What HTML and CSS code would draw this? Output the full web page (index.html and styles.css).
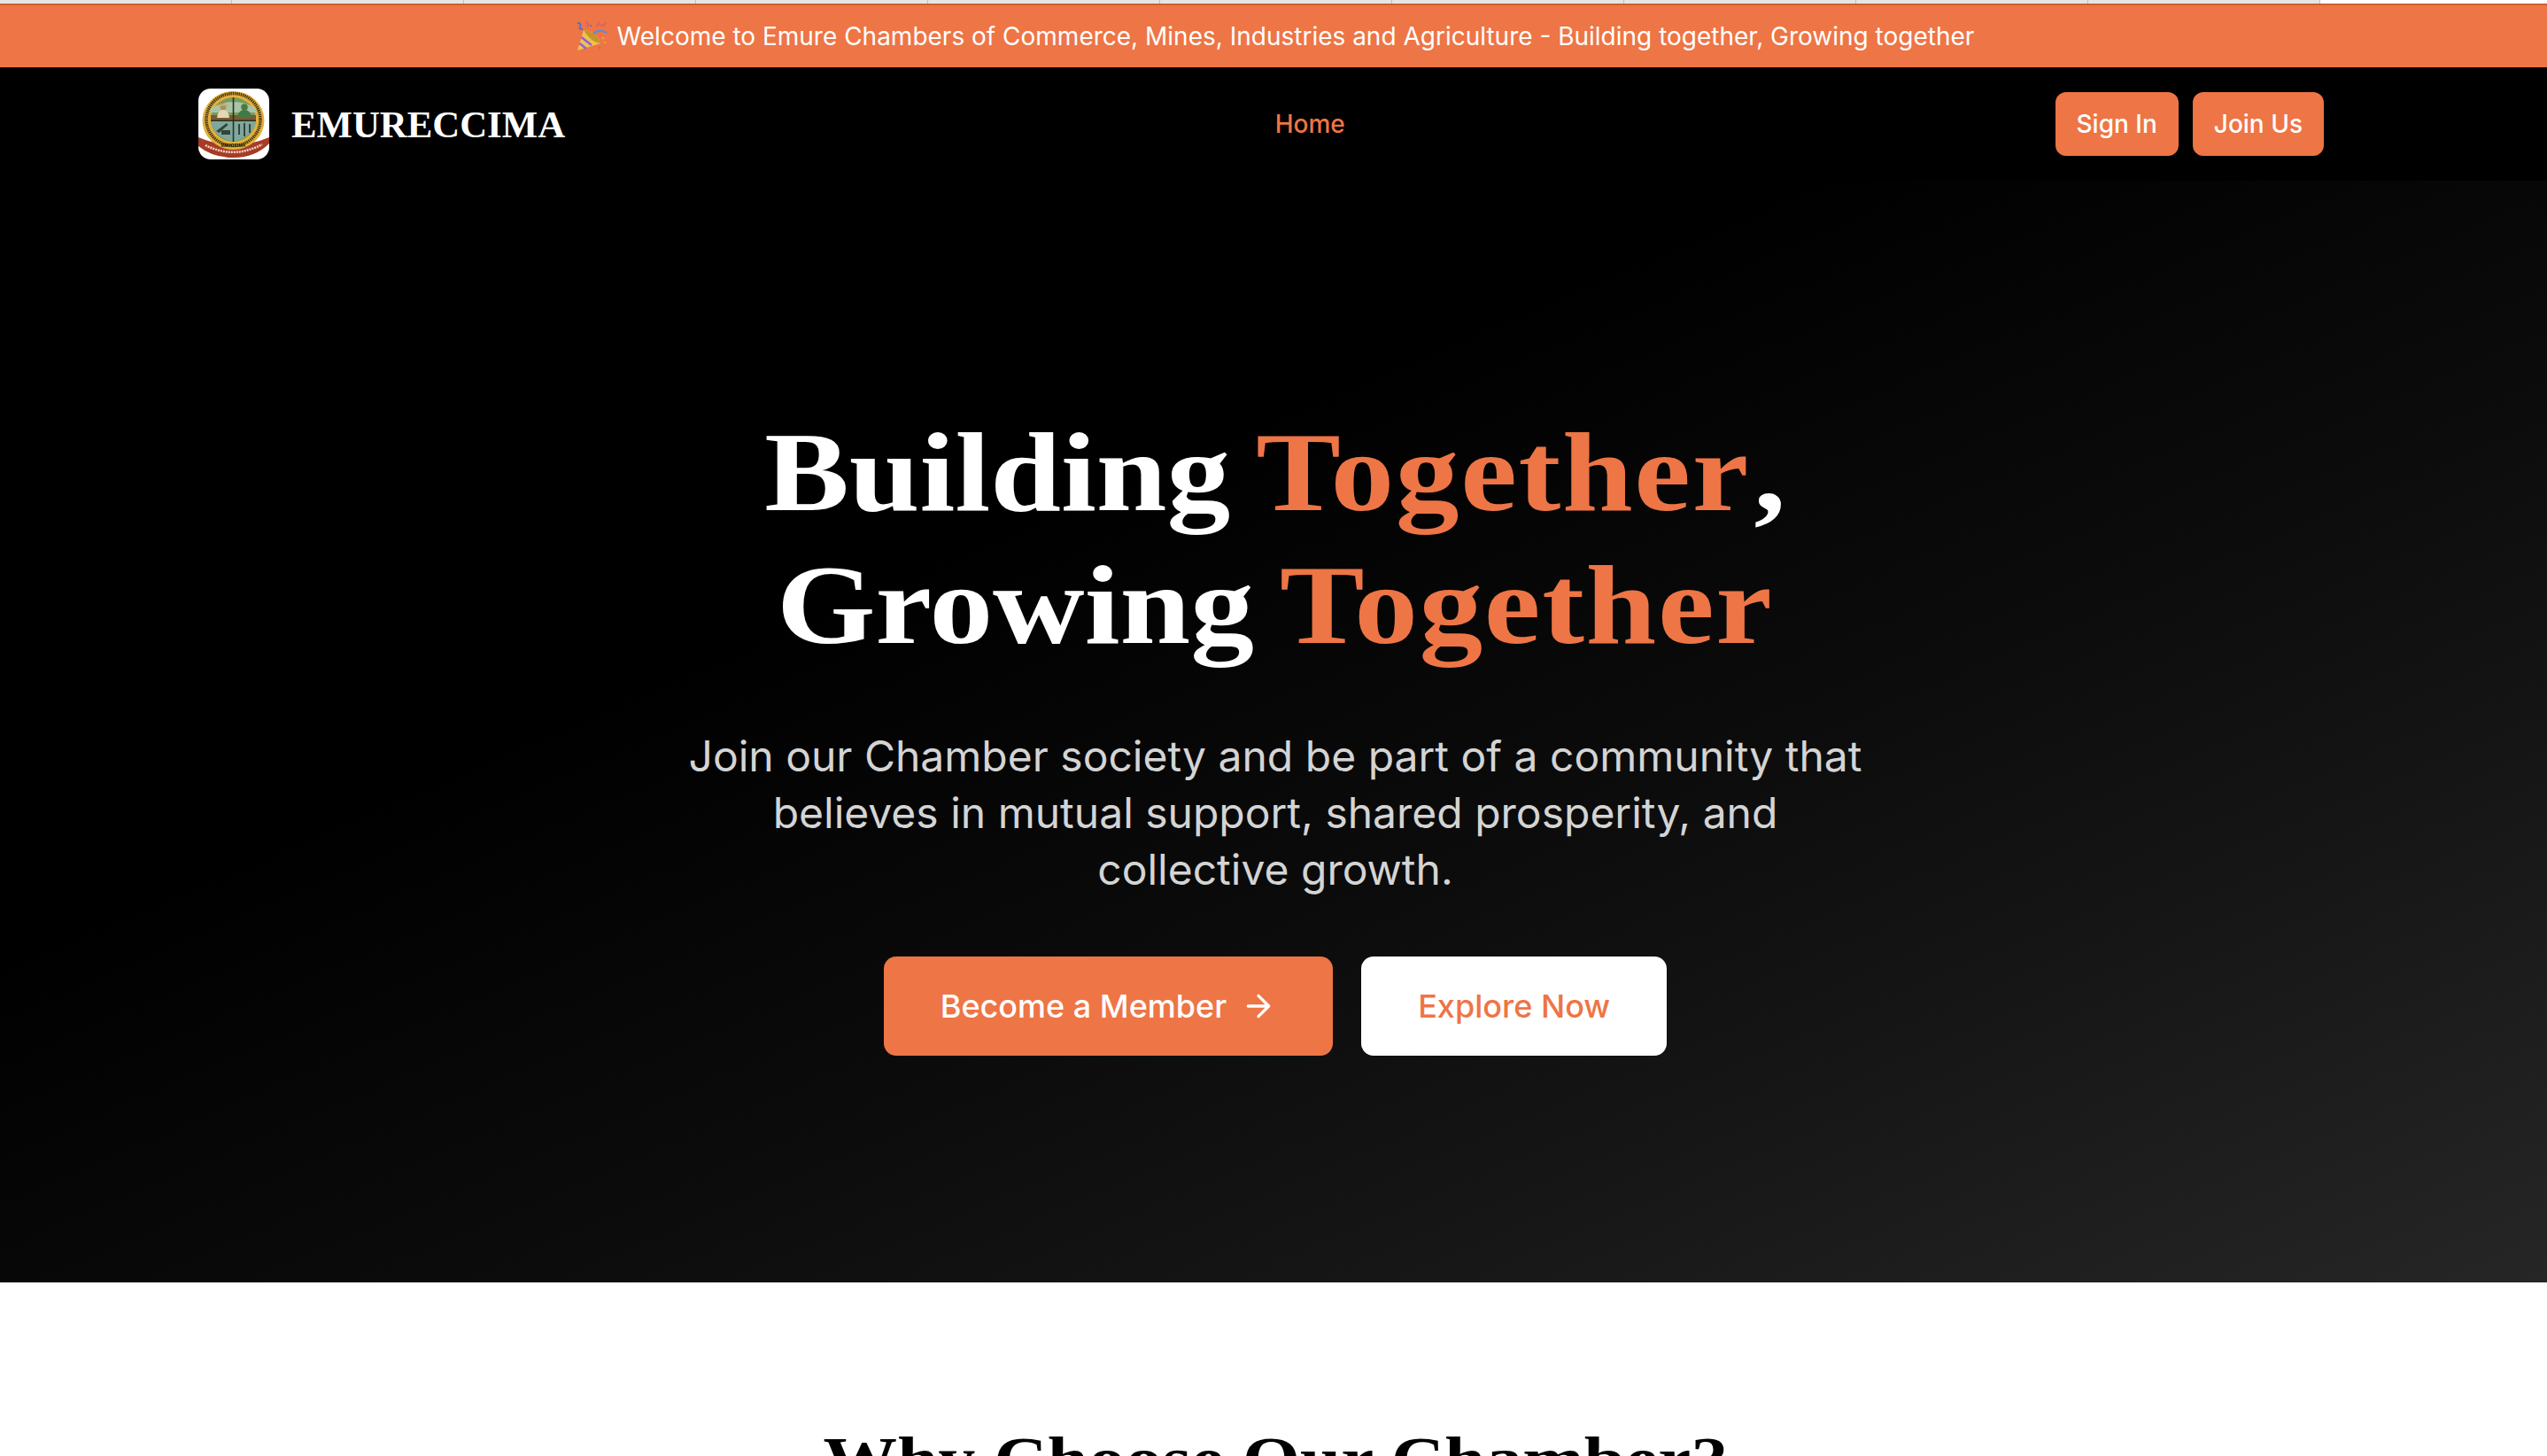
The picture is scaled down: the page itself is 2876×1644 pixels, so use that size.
FILE: index.html
```html
<!DOCTYPE html>
<html lang="en">
<head>
<meta charset="utf-8">
<title>EMURECCIMA</title>
<link rel="stylesheet" href="styles.css">
</head>
<body>
<div class="tabstrip">
  <span class="tab"></span><span class="tab"></span><span class="tab"></span><span class="tab"></span><span class="tab"></span><span class="tab"></span><span class="tab"></span><span class="tab"></span><span class="tab"></span><span class="tab"></span>
</div>
<div class="announce">
  <svg class="popper" viewBox="0 0 34 34" aria-hidden="true">
    <path d="M1 33 L8 10 Q16 10 22 16 Q27 21 27 25 Z" fill="#f0c24a"/>
    <path d="M8 10 Q16 10 22 16 Q27 21 27 25 Q20 24 15 19 Q10 14 8 10 Z" fill="#c9932c"/>
    <path d="M5.500 18 L17 27 M3.500 25 L11 31" stroke="#8f63d6" stroke-width="2.600" fill="none"/>
    <path d="M19 14 Q25 8 34 13" stroke="#4d8fe6" stroke-width="1.800" fill="none"/>
    <path d="M1 2 Q6 2 4 6 Q2 9 7 9" stroke="#4a6fd0" stroke-width="1.800" fill="none"/>
    <path d="M11 1 q4 3 1 6 M22 5 q4 0 3 -4 M27 4 q3 2 6 -2" stroke="#d8606a" stroke-width="1.800" fill="none"/>
    <circle cx="30" cy="19" r="1" fill="#e9bb45"/><circle cx="26" cy="30" r="1.200" fill="#d8606a"/><circle cx="32" cy="24" r="0.900" fill="#e9bb45"/><circle cx="16" cy="5" r="1" fill="#4a6fd0"/>
  </svg>
  <span>Welcome to Emure Chambers of Commerce, Mines, Industries and Agriculture - Building together, Growing together</span>
</div>
<header class="nav">
  <a class="brand" href="#">
    <span class="logo">
      <svg viewBox="0 0 80 80" aria-hidden="true">
        <rect width="80" height="80" fill="#fff"/>
        <path d="M0 55 Q40 72 80 55 V62 Q64 78 40 78 Q16 78 0 65 Z" fill="#a63c26"/>
        <path d="M8 64 Q40 80 72 63" stroke="#f2d9cf" stroke-width="2.500" stroke-dasharray="2 1" fill="none"/>
        <ellipse cx="39.500" cy="36" rx="35" ry="33" fill="#e2b23b"/>
        <ellipse cx="39.500" cy="35" rx="30.500" ry="29.500" fill="none" stroke="#4a3512" stroke-width="3.500" stroke-dasharray="1.500 0.800"/>
        <ellipse cx="39.500" cy="35" rx="25.500" ry="25" fill="#7a9a5f"/>
        <path d="M14 37 H65 Q63 54 39.500 60 Q16 54 14 37 Z" fill="#7fa79d"/>
        <path d="M14 22 Q40 8 65 22 L66 27 H13 Z" fill="#a9c5a8"/>
        <path d="M14 30 H65 V36 H14 Z" fill="#7a5a33"/>
        <path d="M38.700 10 h1.600 v50 h-1.600 Z M14 35.500 h51 v1.600 h-51 Z" fill="#26321f"/>
        <circle cx="28" cy="21" r="3.500" fill="#b98a57"/>
        <path d="M22 18 h12 v1.500 h-12 Z" fill="#c9ac6e"/>
        <path d="M21 33 q1 -9 7 -9 t7 9 Z" fill="#e5d7b5"/>
        <circle cx="52" cy="21" r="3.800" fill="#4f7a3a"/>
        <path d="M44 33 q1 -9 8 -9 t8 9 Z" fill="#3f7a48"/>
        <path d="M45 52 v-12 h2 v12 Z M51 54 v-15 h2 v15 Z M57 50 v-10 h2 v10 Z M20 48 l12 -9 1.500 2 -10 9 Z M26 52 h10 v-5 h-10 Z" fill="#34443a"/>
        <text class="logo-label" x="39.500" y="66" text-anchor="middle">EMUCCIMA</text>
      </svg>
    </span>
    <span class="brand-name">EMURECCIMA</span>
  </a>
  <nav class="nav-links"><a class="nav-link" href="#">Home</a></nav>
  <div class="nav-actions">
    <a class="nav-btn" href="#">Sign In</a>
    <a class="nav-btn" href="#">Join Us</a>
  </div>
</header>
<section class="hero">
  <h1 class="hero-title">Building <span class="accent">Together</span><span class="comma">,</span><br>Growing <span class="accent">Together</span></h1>
  <p class="hero-text">Join our Chamber society and be part of a community that believes in mutual support, shared prosperity, and collective growth.</p>
  <div class="hero-actions">
    <a class="cta cta-primary" href="#">Become a Member
      <svg class="arrow" viewBox="0 0 24 24" aria-hidden="true"><path d="M5 12h14M12 5l7 7-7 7"/></svg>
    </a>
    <a class="cta cta-light" href="#">Explore Now</a>
  </div>
</section>
<section class="why">
  <h2 class="why-title">Why Choose Our Chamber?</h2>
</section>
</body>
</html>
```
FILE: styles.css
```css
* { box-sizing: border-box; }
html, body { margin: 0; padding: 0; height: 100%; overflow: hidden; background: #fff; }
body { font-family: Inter, "Liberation Sans", sans-serif; color: #000; }
a { text-decoration: none; color: inherit; }

.tabstrip { height: 4px; background: #fff; display: flex; }
.tab { width: 262px; flex: none; background: #e6e6e3; border-right: 1px solid #bdbdb9; }

.announce {
  height: 72px;
  background: #ee7545;
  border-top: 2px solid #cf5f33;
  color: #fff;
  font-size: 28px;
  display: flex;
  align-items: center;
  justify-content: center;
  gap: 12px;
  padding-left: 4px;
}
.popper { width: 34px; height: 34px; flex: none; }

.nav {
  height: 128px;
  background: #000;
  padding: 0 252px 0 224px;
  display: flex;
  align-items: center;
  justify-content: space-between;
}
.brand { display: flex; align-items: center; gap: 25px; width: 414px; }
.logo { width: 80px; height: 80px; border-radius: 14px; overflow: hidden; display: block; flex: none; }
.logo svg { display: block; width: 100%; height: 100%; }
.logo-label { font-family: "Liberation Sans", sans-serif; font-size: 5px; font-weight: 700; fill: #2a2010; }
.brand-name {
  font-family: "Liberation Serif", serif;
  font-weight: 700;
  font-size: 42.800px;
  color: #fff;
}
.nav-links { display: flex; }
.nav-link { color: #ee7545; font-size: 28px; font-weight: 500; }
.nav-actions { display: flex; gap: 16px; }
.nav-btn {
  height: 72px;
  padding: 0 24px;
  display: flex;
  align-items: center;
  background: #ee7545;
  color: #fff;
  border-radius: 12px;
  font-size: 28px;
  font-weight: 500;
}

.hero {
  height: 1244px;
  background: linear-gradient(to bottom right, #000 35%, #0c0c0c 60%, #151515 75%, #262626 100%);
  display: flex;
  flex-direction: column;
  align-items: center;
  padding: 254px 0 0 4px;
}
.hero-title {
  margin: 0;
  font-family: "Liberation Serif", serif;
  font-weight: 700;
  font-size: 128px;
  line-height: 150px;
  color: #fff;
  text-align: center;
  word-spacing: -6px;
  transform: scaleX(1.12);
}
.accent { color: #ee7545; letter-spacing: 1.500px; }
.comma { margin-left: 4px; }
.hero-text {
  margin: 64px 0 0;
  width: 1344px;
  color: #d4d4d4;
  font-size: 48px;
  line-height: 64px;
  text-align: center;
}
.hero-actions { margin-top: 66px; display: flex; gap: 32px; }
.cta {
  height: 112px;
  padding: 0 64px;
  border-radius: 14px;
  display: flex;
  align-items: center;
  gap: 16px;
  font-size: 36px;
  font-weight: 500;
}
.cta-primary { background: #ee7545; color: #fff; }
.cta-light { background: #fff; color: #ee7545; }
.arrow { width: 40px; height: 40px; fill: none; stroke: #fff; stroke-width: 2; stroke-linecap: round; stroke-linejoin: round; }

.why { background: #fff; padding: 160px 0 0 4px; }
.why-title {
  width: fit-content;
  margin: 0 auto;
  font-family: "Liberation Serif", serif;
  font-weight: 700;
  font-size: 72px;
  line-height: 80px;
  color: #000;
  transform: scaleX(1.16);
}
```
